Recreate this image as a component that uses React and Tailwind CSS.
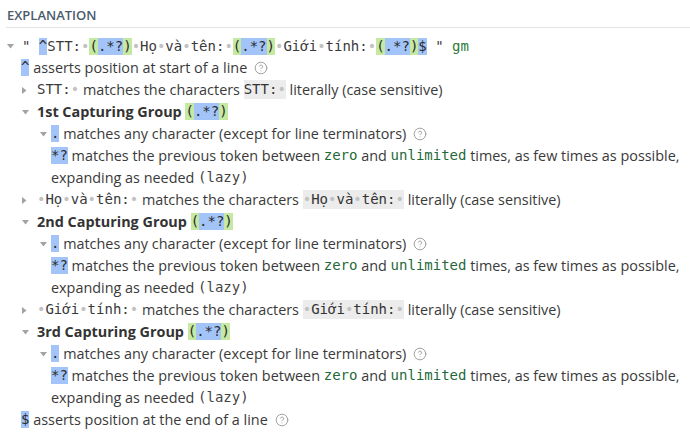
import React from "react";
import { CircleHelp } from "lucide-react";

const MONO = "font-['DejaVu_Sans_Mono',monospace] text-[14px]";

function M({ children, className = "" }) {
  return <span className={`${MONO} ${className}`}>{children}</span>;
}
function Blue({ children }) {
  return <span className={`${MONO} inline-block leading-[17px] bg-[#a2c4f8] text-[#2b2b2b]`}>{children}</span>;
}
function Green({ children }) {
  return <span className={`${MONO} inline-block leading-[17px] bg-[#c6e9a2] text-[#2b2b2b]`}>{children}</span>;
}
function Dot() {
  return <span className="text-[#c2c2c2]">•</span>;
}
function Gray({ children }) {
  return <span className={`${MONO} inline-block leading-[19px] bg-[#ececec] text-[#333]`}>{children}</span>;
}
function Kw({ children }) {
  return <span className={`${MONO} text-[#1f6a3a]`}>{children}</span>;
}
function Help() {
  return <CircleHelp size={14} strokeWidth={1.6} color="#9b9b9b" className="ml-[7px] shrink-0" />;
}
function Down() {
  return (
    <svg width="7" height="5" viewBox="0 0 7 5" className="shrink-0">
      <polygon points="0,0 7,0 3.5,4.5" fill="#a3a3a3" />
    </svg>
  );
}
function Right() {
  return (
    <svg width="5" height="7" viewBox="0 0 5 7" className="shrink-0">
      <polygon points="0,0 4.5,3.5 0,7" fill="#a3a3a3" />
    </svg>
  );
}

function Row({ pl, tri, triW, children }) {
  return (
    <div className={`h-[22px] flex items-center whitespace-pre ${pl}`}>
      {tri && <span className={`flex items-center ${triW}`}>{tri === "down" ? <Down /> : <Right />}</span>}
      <span className="flex items-center whitespace-pre">{children}</span>
    </div>
  );
}

function Group() {
  return (
    <>
      <Green>(</Green>
      <Blue>.*?</Blue>
      <Green>)</Green>
    </>
  );
}

function Lazy() {
  return (
    <>
      <Row pl="pl-[40px]" tri="down" triW="w-[11px]">
        <Blue>.</Blue>
        <span> matches any character (except for line terminators)</span>
        <Help />
      </Row>
      <Row pl="pl-[51px]">
        <Blue>*?</Blue>
        <span> matches the previous token between </span>
        <Kw>zero</Kw>
        <span> and </span>
        <Kw>unlimited</Kw>
        <span> times, as few times as possible,</span>
      </Row>
      <Row pl="pl-[51px]">
        <span>expanding as needed </span>
        <M className="text-[#444]">(lazy)</M>
      </Row>
    </>
  );
}

export default function App() {
  return (
    <div className="w-[690px] h-[432px] overflow-hidden bg-white text-[#3a3a3a] font-['Open_Sans',sans-serif] text-[14.4px]">
      <div className="ml-[6px]">
        <div className="h-[28px] border-b border-[#e3e3e3] flex items-center pl-[1px] pt-[4px]">
          <span className="text-[13px] font-semibold text-[#4b5a6b]">EXPLANATION</span>
        </div>
      </div>
      <div className="pt-[7px]">
        <Row pl="pl-[7px]" tri="down" triW="w-[15px]">
          <M>" </M>
          <Blue>^</Blue>
          <M>STT:<Dot /></M>
          <Group />
          <M><Dot />Họ<Dot />và<Dot />tên:<Dot /></M>
          <Group />
          <M><Dot />Giới<Dot />tính:<Dot /></M>
          <Group />
          <Blue>$</Blue>
          <M> " </M>
          <M className="text-[#2d7a3a]">gm</M>
        </Row>
        <Row pl="pl-[21px]">
          <Blue>^</Blue>
          <span> asserts position at start of a line</span>
          <Help />
        </Row>
        <Row pl="pl-[22px]" tri="right" triW="w-[15px]">
          <M>STT:<Dot /></M>
          <span> matches the characters </span>
          <Gray>STT:<Dot /></Gray>
          <span> literally (case sensitive)</span>
        </Row>
        <Row pl="pl-[22px]" tri="down" triW="w-[15px]">
          <span className="font-bold text-[#333]">1st Capturing Group </span>
          <Group />
        </Row>
        <Lazy />
        <Row pl="pl-[22px]" tri="right" triW="w-[15px]">
          <M><Dot />Họ<Dot />và<Dot />tên:<Dot /></M>
          <span> matches the characters </span>
          <Gray><Dot />Họ<Dot />và<Dot />tên:<Dot /></Gray>
          <span> literally (case sensitive)</span>
        </Row>
        <Row pl="pl-[22px]" tri="down" triW="w-[15px]">
          <span className="font-bold text-[#333]">2nd Capturing Group </span>
          <Group />
        </Row>
        <Lazy />
        <Row pl="pl-[22px]" tri="right" triW="w-[15px]">
          <M><Dot />Giới<Dot />tính:<Dot /></M>
          <span> matches the characters </span>
          <Gray><Dot />Giới<Dot />tính:<Dot /></Gray>
          <span> literally (case sensitive)</span>
        </Row>
        <Row pl="pl-[22px]" tri="down" triW="w-[15px]">
          <span className="font-bold text-[#333]">3rd Capturing Group </span>
          <Group />
        </Row>
        <Lazy />
        <Row pl="pl-[21px]">
          <Blue>$</Blue>
          <span> asserts position at the end of a line</span>
          <Help />
        </Row>
      </div>
    </div>
  );
}
